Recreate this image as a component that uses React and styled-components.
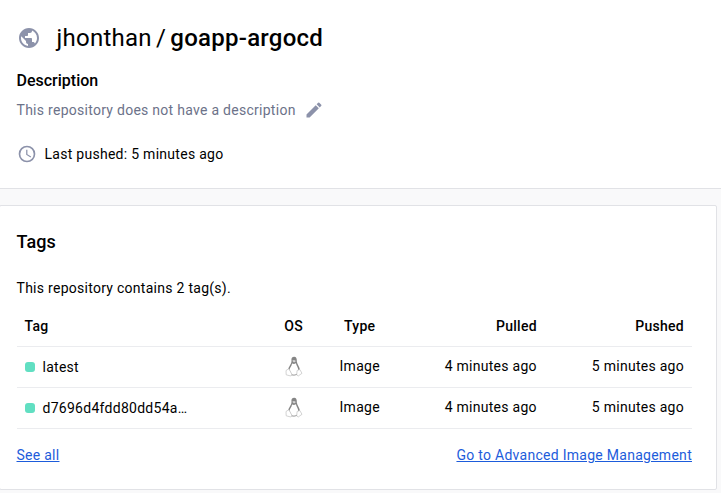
import React from "react";
import styled, { createGlobalStyle } from "styled-components";

const GlobalStyle = createGlobalStyle`
  * { box-sizing: border-box; }
  body { margin: 0; background: #f9f9fa; color: #000; font: 14px/20px Roboto, sans-serif; overflow: hidden; letter-spacing: 0.275px; }
`;
const Page = styled.main`width: 721px; height: 493px; overflow: hidden;`;
const Header = styled.header`
  height: 189px; background: #fff; border-bottom: 1px solid #e1e2e6; padding: 20px 16px 0 16.5px;
`;
const TitleRow = styled.div`display: flex; align-items: center; height: 36px;`;
const Title = styled.h1`
  margin: 0 0 0 16px; font-size: 24px; line-height: 36px; font-weight: 400; letter-spacing: 0.25px; word-spacing: -2px;
  strong { font-weight: 500; }
`;
const Label = styled.h2`margin: 13px 0 0; font-size: 16px; line-height: 24px; font-weight: 500; letter-spacing: 0;`;
const Description = styled.div`
  display: flex; align-items: center; height: 20px; margin-top: 7px; gap: 8.500px; color: #6c7289;
`;
const Pushed = styled.div`display: flex; align-items: center; margin-top: 24px; height: 20px; gap: 8px;`;
const Card = styled.section`
  width: 718px; height: 285px; margin: 16px 0 0 -1px; background: #fff; border: 1px solid #e1e2e6;
  border-radius: 2px; padding: 24px 24px 0 16.500px;
`;
const CardTitle = styled.h2`margin: 0; font-size: 18px; line-height: 24px; font-weight: 500; letter-spacing: 0.1px;`;
const Summary = styled.p`margin: 24px 0 8px;`;
const Table = styled.table`
  width: 675.500px; border-collapse: separate; border-spacing: 0; table-layout: fixed;
`;
const Cell = styled.td`
  height: 41px; padding: 0 8px 2px; border-bottom: 1px solid #ebecef; text-align: ${(p) => p.$align || "left"};
  font-weight: 400;
`;
const HeadCell = styled(Cell)`font-weight: 500; padding-bottom: 0;`;
const TagName = styled.span`display: flex; align-items: center; gap: 8px; padding-top: 2px;`;
const Status = styled.i`width: 10px; height: 10px; border-radius: 3px; background: #61dfc2;`;
const Footer = styled.footer`display: flex; justify-content: space-between; margin-top: 16px; width: 675.500px;`;
const Link = styled.a`color: #1d5cdb; text-decoration: underline;`;
const Icon = styled.svg`display: block; width: ${(p) => p.$size}px; height: ${(p) => p.$size}px; fill: #8c92aa; flex: none;`;
const PenguinIcon = styled.svg`display: block; width: 18px; height: 21px; margin: 1px auto 0;`;

const Penguin = () => (
  <PenguinIcon viewBox="0 0 18 21" fill="none">
    <path d="M6.500 5C6 2 7.200 .7 9.200 .7S12 2.400 11.800 5.500C12 8 15 11 15 14.500L13 17.500Q9 20 5 17.500L3 14.500C3 11 6.500 8.500 6.500 5Z" fill="#858585" />
    <path d="M7 7.500L9 8 11 7.300C11.300 10 13.800 12 13.200 15.500L11.500 18.200Q9 19.500 6.500 18.200L4.500 14C4.700 11.500 7 10 7 7.500Z" fill="#fff" />
    <path d="M7.200 4.700L9 4.100 11 5 9 6.400Z" fill="#d9d9d9" />
    <path d="M1 14.500L3.900 12.700 7 18.500 5.800 20 1.200 18.800ZM12.100 14.500L14.800 13.500 17 17.300 13.200 20 11.700 19Z" fill="#fff" stroke="#c0c0c0" strokeWidth=".7" />
    <path d="M6.500 18.900Q9 19.800 11.700 18.500" stroke="#929292" strokeWidth=".8" />
  </PenguinIcon>
);
const rows = ["latest", "d7696d4fdd80dd54a…"];

export default function App() {
  return (
    <Page>
      <GlobalStyle />
      <Header>
        <TitleRow>
          <Icon $size={24} viewBox="0 0 24 24"><path d="M12 2C6.480 2 2 6.480 2 12s4.480 10 10 10 10-4.480 10-10S17.520 2 12 2zm-1 17.930C7.050 19.440 4 16.080 4 12c0-.62.08-1.210.21-1.790L9 15v1c0 1.100.9 2 2 2v1.930zm6.900-2.540c-.26-.81-1-1.390-1.900-1.390h-1v-3c0-.55-.45-1-1-1H8v-2h2c.55 0 1-.45 1-1V7h2c1.100 0 2-.9 2-2v-.41c2.930 1.190 5 4.060 5 7.410 0 2.080-.8 3.970-2.100 5.390z" /></Icon>
          <Title>jhonthan / <strong>goapp-argocd</strong></Title>
        </TitleRow>
        <Label>Description</Label>
        <Description>
          This repository does not have a description
          <Icon $size={20} viewBox="0 0 24 24"><path d="M3 17.250V21h3.750L17.810 9.940l-3.750-3.750L3 17.250zM20.710 7.040a1 1 0 0 0 0-1.410l-2.340-2.340a1 1 0 0 0-1.410 0l-1.830 1.830 3.750 3.750 1.830-1.830z" /></Icon>
        </Description>
        <Pushed>
          <Icon $size={20} viewBox="0 0 24 24"><path d="M12 2a10 10 0 1 0 0 20 10 10 0 0 0 0-20zm0 18a8 8 0 1 1 0-16 8 8 0 0 1 0 16zm.5-13H11v6l5.250 3.150.75-1.230-4.500-2.670z" /></Icon>
          Last pushed: 5 minutes ago
        </Pushed>
      </Header>
      <Card>
        <CardTitle>Tags</CardTitle>
        <Summary>This repository contains 2 tag(s).</Summary>
        <Table>
          <colgroup><col width="250" /><col width="54" /><col width="78" /><col width="146" /><col width="147" /></colgroup>
          <thead><tr>
            <HeadCell as="th">Tag</HeadCell><HeadCell as="th" $align="center">OS</HeadCell>
            <HeadCell as="th" $align="center">Type</HeadCell><HeadCell as="th" $align="right">Pulled</HeadCell>
            <HeadCell as="th" $align="right">Pushed</HeadCell>
          </tr></thead>
          <tbody>{rows.map((name) => (
            <tr key={name}>
              <Cell><TagName><Status />{name}</TagName></Cell>
              <Cell><Penguin /></Cell>
              <Cell $align="center">Image</Cell>
              <Cell $align="right">4 minutes ago</Cell>
              <Cell $align="right">5 minutes ago</Cell>
            </tr>
          ))}</tbody>
        </Table>
        <Footer><Link>See all</Link><Link>Go to Advanced Image Management</Link></Footer>
      </Card>
    </Page>
  );
}
